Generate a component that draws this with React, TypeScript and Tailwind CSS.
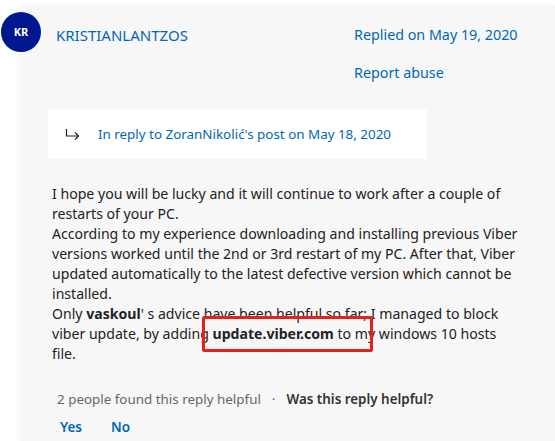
import React from 'react'

const ReplyArrow = () => (
  <svg width="15" height="13" viewBox="0 0 15 13" fill="none" stroke="#222" strokeWidth="1.2">
    <path d="M1.5 1 V8 H13.5" />
    <path d="M10 4.5 L13.5 8 L10 11.5" />
  </svg>
)

export default function App() {
  return (
    <div
      className="relative w-[555px] h-[441px] overflow-hidden bg-white pt-[5px] pl-[20px]"
      style={{ fontFamily: '"Noto Sans", "Open Sans", sans-serif' }}
    >
      <div className="relative h-full bg-[#f7f7f7] shadow-[-3px_0_5px_rgba(0,0,0,0.03)]">
        {/* avatar sits over the panel edge */}
        <div className="absolute left-[-19px] top-[7px] flex h-10 w-10 items-center justify-center rounded-full bg-[#00188f] text-[11px] font-bold text-white">
          KR
        </div>

        <div className="flex justify-between pl-[36px] pr-[38px] pt-[20px]">
          <div className="text-[15px] leading-5 text-[#0067b8]">KRISTIANLANTZOS</div>
          <div className="flex w-[163px] flex-col gap-[18px] text-[14.3px] leading-5 text-[#0067b8]">
            <span className="whitespace-nowrap">Replied on May 19, 2020</span>
            <span>Report abuse</span>
          </div>
        </div>

        <div className="ml-[28px] mt-[27px] flex h-[49px] w-[379px] items-center gap-[18px] bg-white pl-[17px]">
          <ReplyArrow />
          <span className="whitespace-nowrap text-[13.4px] text-[#0067b8]">
            In reply to ZoranNikolić's post on May 18, 2020
          </span>
        </div>

        <p className="mt-[25px] w-[501px] pl-[32px] text-[14.1px] leading-5 text-[#222]">
          I hope you will be lucky and it will continue to work after a couple of restarts of your PC.
          <br />
          According to my experience downloading and installing previous Viber versions worked until the 2nd or 3rd
          restart of my PC. After that, Viber updated automatically to the latest defective version which cannot be
          installed.
          <br />
          Only <b>vaskoul</b>' s advice have been helpful so far; I managed to block viber update, by adding{' '}
          <span className="relative">
            <b>update.viber.com</b>
            <span className="absolute left-[-11px] right-[-39px] top-[-8px] h-[36px] rounded-[2px] border-[3px] border-[#e8201c]" />
          </span>{' '}
          to my windows 10 hosts file.
        </p>

        <div className="mt-[25px] flex items-center pl-[37px] text-[13.4px] leading-5">
          <span className="text-[#666]">2 people found this reply helpful</span>
          <span className="mx-[11px] text-[#666]">·</span>
          <span className="font-semibold text-[#333]">Was this reply helpful?</span>
        </div>

        <div className="mt-[8px] flex gap-[29px] pl-[40px] text-[13.5px] font-semibold leading-5 text-[#0067b8]">
          <span>Yes</span>
          <span>No</span>
        </div>
      </div>
    </div>
  )
}
